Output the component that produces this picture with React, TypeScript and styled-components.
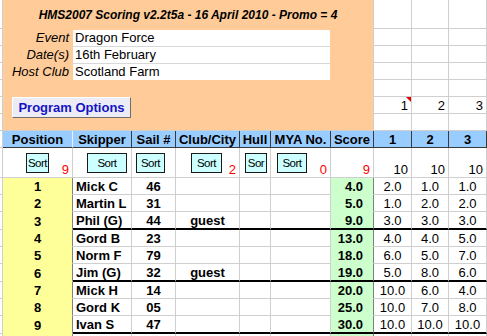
import React from "react";
import styled, { createGlobalStyle, css } from "styled-components";

const GRID = "#cfcfcf";
const ORANGE = "#ffcc99";
const COLS = "3px 70px 59px 44px 64px 31px 60px 43px 38px 37px 38px";

const GlobalStyle = createGlobalStyle`
  html, body {
    margin: 0;
    padding: 0;
    background: #fff;
    overflow: hidden;
  }
  body {
    font-family: "Liberation Sans", Arial, sans-serif;
    font-size: 13px;
    color: #000;
  }
`;

const Sheet = styled.div`
  width: 487px;
  height: 336px;
  overflow: hidden;
`;

const Cell = styled.div`
  box-sizing: border-box;
  border-right: 1px solid ${GRID};
  border-bottom: 1px solid ${GRID};
  overflow: hidden;
  white-space: nowrap;
  min-width: 0;
`;

/* ---- event banner ---- */

const TopBand = styled.div`
  display: grid;
  grid-template-columns: 3px 371px 38px 37px 38px;
  grid-template-rows: 29px repeat(6, 17px);
`;

const Panel = styled.div`
  grid-column: 2;
  grid-row: 1 / 8;
  box-sizing: border-box;
  background: ${ORANGE};
  border-right: 1px solid ${GRID};
  border-bottom: 1px solid ${GRID};
  display: flex;
  flex-direction: column;
`;

const Title = styled.div`
  height: 29px;
  display: flex;
  align-items: center;
  justify-content: center;
  font-size: 12px;
  font-weight: 700;
  font-style: italic;
`;

const InfoRow = styled.div`
  display: grid;
  grid-template-columns: 70px 257px;
  height: 17px;
`;

const Label = styled.div`
  font-style: italic;
  text-align: right;
  padding-right: 4px;
  line-height: 17px;
`;

const Value = styled.div<{ $first?: boolean }>`
  background: #fff;
  border-top: 1px solid ${(p) => (p.$first ? ORANGE : "#d8d8d8")};
  padding-left: 2px;
  line-height: 16px;
`;

const OptionsButton = styled.button`
  margin: 17px 0 0 9px;
  width: 119px;
  height: 21px;
  box-sizing: border-box;
  padding: 0;
  background: #ececf6;
  border: 1px solid;
  border-color: #ffffff #6e6e6e #6e6e6e #ffffff;
  color: #1414c4;
  font: 700 13px "Liberation Sans", Arial, sans-serif;
`;

const TopCell = styled(Cell)<{ $note?: boolean }>`
  position: relative;
  display: flex;
  align-items: center;
  justify-content: flex-end;
  padding-right: 3px;
  ${(p) =>
    p.$note &&
    css`
      &::after {
        content: "";
        position: absolute;
        top: 0;
        right: 0;
        border-top: 5px solid #e00000;
        border-left: 5px solid transparent;
      }
    `}
`;

/* ---- results table ---- */

const Row = styled.div<{ $h: number }>`
  display: grid;
  grid-template-columns: ${COLS};
  height: ${(p) => p.$h}px;
`;

const HeadCell = styled(Cell)<{ $light?: boolean }>`
  background: #99ccff;
  border-right-color: ${(p) => (p.$light ? "#e8f2ff" : "#3a3a3a")};
  border-bottom-color: #3a3a3a;
  font-weight: 700;
  display: flex;
  align-items: center;
  justify-content: center;
`;

const SortCell = styled(Cell)`
  display: flex;
  align-items: center;
`;

const SortButton = styled.div<{ $left: number; $w: number }>`
  box-sizing: border-box;
  flex: none;
  margin-left: ${(p) => p.$left}px;
  width: ${(p) => p.$w}px;
  height: 20px;
  background: #ccffff;
  border: 1px solid #1a1a1a;
  font-size: 11.5px;
  letter-spacing: -0.5px;
  display: flex;
  align-items: center;
  justify-content: center;
  overflow: hidden;
`;

const Count = styled.span<{ $red?: boolean }>`
  margin-left: auto;
  align-self: flex-end;
  line-height: 15px;
  padding-right: 3px;
  color: ${(p) => (p.$red ? "#ff0000" : "#000")};
`;

type Align = "left" | "center" | "right";

const DataCell = styled(Cell)<{
  $align?: Align;
  $bold?: boolean;
  $fill?: string;
  $edge?: boolean;
  $end?: boolean;
}>`
  display: flex;
  align-items: center;
  justify-content: ${(p) =>
    p.$align === "left" ? "flex-start" : p.$align === "right" ? "flex-end" : "center"};
  padding: 1px 3px 0;
  font-weight: ${(p) => (p.$bold ? 700 : 400)};
  background: ${(p) => p.$fill ?? "#fff"};
  ${(p) => p.$fill && css`border-bottom-color: transparent;`}
  ${(p) => p.$edge && css`border-right-color: #808080;`}
  ${(p) => p.$end && css`border-bottom: 2px solid #000;`}
`;

const ScoreCell = styled(DataCell)`
  padding-right: 10px;
`;

type Result = {
  pos: number;
  name: string;
  sail: string;
  club?: string;
  score: string;
  races: string[];
  end?: boolean;
};

const results: Result[] = [
  { pos: 1, name: "Mick C", sail: "46", score: "4.0", races: ["2.0", "1.0", "1.0"] },
  { pos: 2, name: "Martin L", sail: "31", score: "5.0", races: ["1.0", "2.0", "2.0"] },
  { pos: 3, name: "Phil (G)", sail: "44", club: "guest", score: "9.0", races: ["3.0", "3.0", "3.0"], end: true },
  { pos: 4, name: "Gord B", sail: "23", score: "13.0", races: ["4.0", "4.0", "5.0"] },
  { pos: 5, name: "Norm F", sail: "79", score: "18.0", races: ["6.0", "5.0", "7.0"] },
  { pos: 6, name: "Jim (G)", sail: "32", club: "guest", score: "19.0", races: ["5.0", "8.0", "6.0"], end: true },
  { pos: 7, name: "Mick H", sail: "14", score: "20.0", races: ["10.0", "6.0", "4.0"] },
  { pos: 8, name: "Gord K", sail: "05", score: "25.0", races: ["10.0", "7.0", "8.0"] },
  { pos: 9, name: "Ivan S", sail: "47", score: "30.0", races: ["10.0", "10.0", "10.0"], end: true },
];

const YELLOW = "#ffff99";
const GREEN = "#ccffcc";

const info = [
  ["Event", "Dragon Force"],
  ["Date(s)", "16th February"],
  ["Host Club", "Scotland Farm"],
];

const bandRows = [0, 1, 2, 3, 4, 5, 6];

export default function App() {
  return (
    <Sheet>
      <GlobalStyle />
      <TopBand>
        {bandRows.map((r) => (
          <Cell key={"g" + r} style={{ gridColumn: 1, gridRow: r + 1 }} />
        ))}
        <Panel>
          <Title>HMS2007 Scoring v2.2t5a - 16 April 2010 - Promo = 4</Title>
          {info.map(([label, value], i) => (
            <InfoRow key={label}>
              <Label>{label}</Label>
              <Value $first={i === 0}>{value}</Value>
            </InfoRow>
          ))}
          <OptionsButton>Program Options</OptionsButton>
        </Panel>
        {bandRows.map((r) =>
          [0, 1, 2].map((c) => (
            <TopCell
              key={`t${r}-${c}`}
              $note={r === 5 && c === 0}
              style={{ gridColumn: c + 3, gridRow: r + 1 }}
            >
              {r === 5 ? c + 1 : ""}
            </TopCell>
          ))
        )}
      </TopBand>

      <Row $h={17}>
        <Cell />
        <HeadCell $light>Position</HeadCell>
        <HeadCell>Skipper</HeadCell>
        <HeadCell>Sail #</HeadCell>
        <HeadCell>Club/City</HeadCell>
        <HeadCell>Hull</HeadCell>
        <HeadCell>MYA No.</HeadCell>
        <HeadCell>Score</HeadCell>
        <HeadCell>1</HeadCell>
        <HeadCell>2</HeadCell>
        <HeadCell>3</HeadCell>
      </Row>

      <Row $h={30}>
        <Cell />
        <SortCell>
          <SortButton $left={23} $w={23}>Sort</SortButton>
          <Count $red>9</Count>
        </SortCell>
        <SortCell>
          <SortButton $left={14} $w={40}>Sort</SortButton>
        </SortCell>
        <SortCell>
          <SortButton $left={4} $w={29}>Sort</SortButton>
        </SortCell>
        <SortCell>
          <SortButton $left={15} $w={31}>Sort</SortButton>
          <Count $red>2</Count>
        </SortCell>
        <SortCell>
          <SortButton $left={5} $w={22}>Sor</SortButton>
        </SortCell>
        <SortCell>
          <SortButton $left={6} $w={30}>Sort</SortButton>
          <Count $red>0</Count>
        </SortCell>
        <SortCell>
          <Count $red>9</Count>
        </SortCell>
        <SortCell>
          <Count>10</Count>
        </SortCell>
        <SortCell>
          <Count>10</Count>
        </SortCell>
        <SortCell>
          <Count>10</Count>
        </SortCell>
      </Row>

      {results.map((r) => (
        <Row key={r.pos} $h={r.end ? 18 : 17}>
          <Cell />
          <DataCell $bold $fill={YELLOW} $edge>
            {r.pos}
          </DataCell>
          <DataCell $bold $align="left" $end={r.end}>
            {r.name}
          </DataCell>
          <DataCell $bold $end={r.end}>
            {r.sail}
          </DataCell>
          <DataCell $bold $end={r.end}>
            {r.club ?? ""}
          </DataCell>
          <DataCell $end={r.end} />
          <DataCell $end={r.end} />
          <ScoreCell $bold $align="right" $fill={GREEN} $edge $end={r.end}>
            {r.score}
          </ScoreCell>
          {r.races.map((v, i) => (
            <DataCell key={i} $end={r.end}>
              {v}
            </DataCell>
          ))}
        </Row>
      ))}

      <Row $h={17}>
        <Cell />
        <DataCell $fill={YELLOW} $edge />
        <DataCell />
        <DataCell />
        <DataCell />
        <DataCell />
        <DataCell />
        <ScoreCell $fill={GREEN} $edge />
        <DataCell />
        <DataCell />
        <DataCell />
      </Row>
    </Sheet>
  );
}
